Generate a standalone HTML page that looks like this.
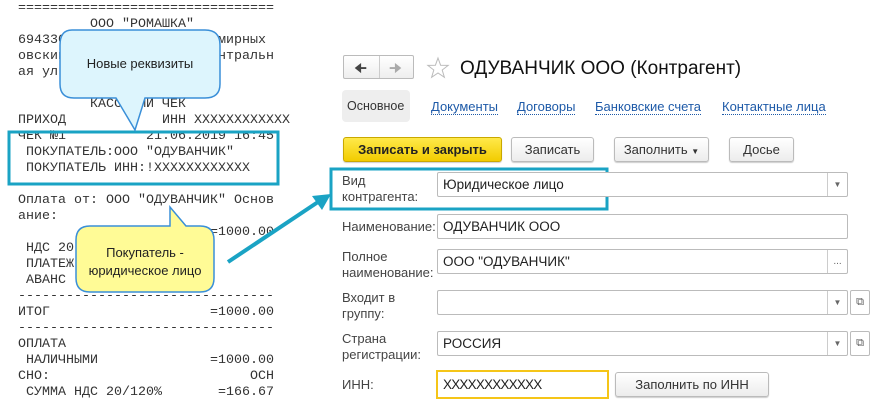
<!DOCTYPE html>
<html><head><meta charset="utf-8"><style>
body{margin:0;width:883px;height:418px;background:#fff;position:relative;overflow:hidden;font-family:"Liberation Sans","Noto Sans CJK SC",sans-serif;}
.r{position:absolute;left:18px;top:1px;font-family:"Liberation Mono","Noto Sans CJK SC",monospace;font-size:13.33px;line-height:16px;color:#333;white-space:pre;margin:0}
.a{position:absolute}
.lbl{position:absolute;left:342px;font-size:13px;color:#444;line-height:16px}
.inp{position:absolute;left:437px;border:1px solid #bbb;border-radius:2px;background:#fff;font-size:13.5px;color:#222;box-sizing:border-box;padding-left:5px}
.btn{position:absolute;top:137px;height:25px;border:1px solid #bbb;border-radius:3px;background:linear-gradient(#fff,#ececec);font-size:13px;color:#333;box-sizing:border-box;text-align:center;line-height:23px;box-shadow:0 1px 1px #ccc}
.dd{position:absolute;top:0;bottom:0;width:19px;border-left:1px solid #ccc;font-size:8px;color:#666;text-align:center}
.tab{position:absolute;top:99px;font-size:13px;color:#1e5aa8;border-bottom:1px dotted #1e5aa8;line-height:15px}
</style></head><body>
<pre class="r">================================
         ООО "РОМАШКА"
694330,Сахалинская о.,п.Смирных
овский р-н,пгт.Смирных,Центральн
ая ул.,д.1

         КАССОВЫЙ ЧЕК
ПРИХОД            ИНН XXXXXXXXXXXX
ЧЕК №1          21.06.2019 16:45
 ПОКУПАТЕЛЬ:ООО "ОДУВАНЧИК"
 ПОКУПАТЕЛЬ ИНН:!XXXXXXXXXXXX
--------------------------------
Оплата от: ООО "ОДУВАНЧИК" Основ
ание:
                        =1000.00
 НДС 20
 ПЛАТЕЖ
 АВАНС
--------------------------------
ИТОГ                    =1000.00
--------------------------------
ОПЛАТА
 НАЛИЧНЫМИ              =1000.00
СНО:                         ОСН
 СУММА НДС 20/120%       =166.67</pre>
<svg class="a" style="left:0;top:0" width="883" height="418">
<rect x="9" y="132" width="269" height="52" fill="none" stroke="#1aa3c4" stroke-width="3"/>
<path d="M72 30 H205 Q220 30 220 45 V84 Q220 98 205 98 H145 L135 130 L116 98 H74 Q60 98 60 84 V45 Q60 30 72 30 Z" fill="#ddf5fd" stroke="#3a8fd8" stroke-width="1.5"/>
<path d="M90 226 H170 L170 207 L186 226 H200 Q214 226 214 240 V278 Q214 292 200 292 H90 Q76 292 76 278 V240 Q76 226 90 226 Z" fill="#fffb96" stroke="#3a8fd8" stroke-width="1.5"/>
<rect x="331" y="169" width="276" height="40" fill="none" stroke="#1aa3c4" stroke-width="3"/>
<line x1="228" y1="262" x2="318" y2="202" stroke="#1aa3c4" stroke-width="4"/>
<path d="M331 194 L312 196 L322 210 Z" fill="#1aa3c4"/>
<path d="M438 58 l2.6 7.2 7.6 0.2 -6 4.6 2.2 7.3 -6.4 -4.3 -6.4 4.3 2.2 -7.3 -6 -4.6 7.6 -0.2z" fill="none" stroke="#bbb"/>
</svg>
<div class="a" style="left:60px;top:56px;width:160px;text-align:center;font-size:13px;color:#222">Новые реквизиты</div>
<div class="a" style="left:76px;top:244px;width:138px;text-align:center;font-size:13px;line-height:18px;color:#222">Покупатель -<br>юридическое лицо</div>
<div class="a" style="left:343px;top:55px;width:71px;height:24px;border:1px solid #bbb;border-radius:2px;background:linear-gradient(#fff,#eee);box-sizing:border-box">
<div class="a" style="left:35px;top:0;bottom:0;border-left:1px solid #ccc"></div>
<div class="a" style="left:10px;top:2px;font-size:14px;color:#444">&#129032;</div>
<div class="a" style="left:45px;top:2px;font-size:14px;color:#aaa">&#129034;</div></div>
<div class="a" style="left:460px;top:58px;font-size:19px;color:#111">ОДУВАНЧИК ООО (Контрагент)</div>
<div class="a" style="left:342px;top:90px;width:68px;height:32px;background:#eee;border-radius:4px"></div>
<div class="a" style="left:347px;top:99px;font-size:12.5px;color:#333">Основное</div>
<div class="tab" style="left:431px">Документы</div>
<div class="tab" style="left:517px">Договоры</div>
<div class="tab" style="left:595px">Банковские счета</div>
<div class="tab" style="left:722px">Контактные лица</div>
<div class="btn" style="left:343px;width:159px;background:linear-gradient(#ffe94a,#f2cc00);border-color:#c9a800;font-weight:bold;color:#222">Записать и закрыть</div>
<div class="btn" style="left:511px;width:83px">Записать</div>
<div class="btn" style="left:614px;width:95px">Заполнить <span style="font-size:8px">▼</span></div>
<div class="btn" style="left:729px;width:65px">Досье</div>
<div class="lbl" style="top:173px">Вид<br>контрагента:</div>
<div class="inp" style="top:172px;width:411px;height:25px;line-height:23px">Юридическое лицо<div class="dd" style="right:0;line-height:23px">▼</div></div>
<div class="lbl" style="top:219px">Наименование:</div>
<div class="inp" style="top:214px;width:411px;height:25px;line-height:23px">ОДУВАНЧИК ООО</div>
<div class="lbl" style="top:249px">Полное<br>наименование:</div>
<div class="inp" style="top:249px;width:411px;height:25px;line-height:23px">ООО "ОДУВАНЧИК"<div class="dd" style="right:0;line-height:23px;font-size:10px">...</div></div>
<div class="lbl" style="top:290px">Входит в<br>группу:</div>
<div class="inp" style="top:290px;width:411px;height:25px;line-height:23px"><div class="dd" style="right:0;line-height:23px">▼</div></div>
<div class="a" style="left:850px;top:290px;width:20px;height:25px;border:1px solid #bbb;border-radius:2px;box-sizing:border-box;text-align:center;font-size:11px;line-height:23px;color:#555">⧉</div>
<div class="lbl" style="top:331px">Страна<br>регистрации:</div>
<div class="inp" style="top:331px;width:411px;height:25px;line-height:23px">РОССИЯ<div class="dd" style="right:0;line-height:23px">▼</div></div>
<div class="a" style="left:850px;top:331px;width:20px;height:25px;border:1px solid #bbb;border-radius:2px;box-sizing:border-box;text-align:center;font-size:11px;line-height:23px;color:#555">⧉</div>
<div class="lbl" style="top:377px">ИНН:</div>
<div class="inp" style="left:436px;top:370px;width:173px;height:29px;line-height:25px;border:2px solid #f5c518;border-radius:0;letter-spacing:-0.8px">XXXXXXXXXXXX</div>
<div class="btn" style="left:615px;top:372px;width:154px">Заполнить по ИНН</div>
</body></html>
